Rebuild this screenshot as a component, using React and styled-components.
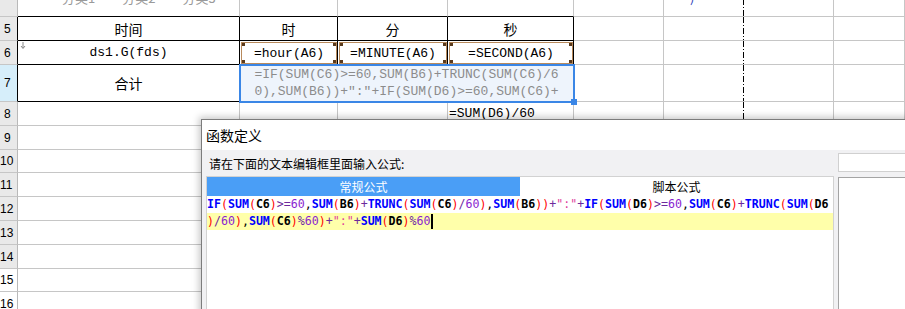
import styled, { createGlobalStyle } from "styled-components";

const GlobalStyle = createGlobalStyle`
  html, body { margin: 0; padding: 0; background: #fff; overflow: hidden; }
`;

const COLS = "18px 222px 98px 110px 126px 90px 80px 90px 1fr";
const GRID = "#c6c6c6";

const Page = styled.div`
  position: relative;
  width: 905px;
  height: 309px;
  overflow: hidden;
  font-family: "Liberation Mono", "Noto Sans CJK SC", monospace;
`;

const Sheet = styled.div`
  margin-top: -12px;
`;

const Row = styled.div`
  display: grid;
  grid-template-columns: ${COLS};
  height: ${(p) => p.$h}px;
`;

const RowHead = styled.div`
  box-sizing: border-box;
  background: ${(p) => (p.$sel ? "#d6eefa" : p.$plain ? "#fff" : "#e9e9e9")};
  border-right: 1px solid ${(p) => (p.$dark ? "#000" : "#b9b9b9")};
  border-bottom: 1px solid ${GRID};
  display: flex;
  align-items: center;
  padding-left: ${(p) => (p.$wide ? 0 : 4)}px;
  font: 12px "Liberation Sans", sans-serif;
  color: #000;
`;

const Cell = styled.div`
  position: relative;
  box-sizing: border-box;
  border-right: ${(p) => (p.$dash ? "none" : `1px solid ${p.$br ? "#000" : GRID}`)};
  border-bottom: 1px solid ${(p) => (p.$bb ? "#000" : GRID)};
  background-image: ${(p) =>
    p.$dash
      ? "repeating-linear-gradient(to bottom, #000 0 6px, transparent 6px 8px, #000 8px 9px, transparent 9px 11px)"
      : "none"};
  background-size: 1px 100%;
  background-position: right top;
  background-repeat: no-repeat;
  display: flex;
  align-items: ${(p) => (p.$top ? "flex-start" : "center")};
  justify-content: ${(p) => p.$justify || "center"};
  padding-left: ${(p) => p.$pl || 0}px;
  font-size: ${(p) => p.$fs || 13}px;
  color: ${(p) => p.$color || "#000"};
  white-space: nowrap;
`;

const CatText = styled.div`
  display: flex;
  gap: 27px;
  padding-top: 2px;
  font: 13px "Noto Sans CJK SC", sans-serif;
  line-height: 16px;
  color: #9a9a9a;
`;

const FormulaCell = styled(Cell)`
  padding: 1px 0 0 1px;
  align-items: stretch;
`;

const FormulaBox = styled.div`
  flex: 1;
  display: flex;
  align-items: center;
  justify-content: center;
  border: 1px solid #b88a5c;
  background:
    linear-gradient(#5a3a1c, #5a3a1c) left top / 3px 3px no-repeat,
    linear-gradient(#5a3a1c, #5a3a1c) right top / 3px 3px no-repeat,
    linear-gradient(#5a3a1c, #5a3a1c) left bottom / 3px 3px no-repeat,
    linear-gradient(#5a3a1c, #5a3a1c) right bottom / 3px 3px no-repeat;
`;

const Marker = styled.svg`
  position: absolute;
  left: 2px;
  top: 1px;
`;

const MergedCell = styled(Cell)`
  grid-column: span 3;
  background: #eef4fc;
  z-index: 1;
  &::after {
    content: "";
    position: absolute;
    top: -1px;
    left: -1px;
    right: -2px;
    bottom: -2px;
    border: 2px solid #3a86e6;
    pointer-events: none;
  }
`;

const Handle = styled.span`
  position: absolute;
  right: -4px;
  bottom: -4px;
  width: 6px;
  height: 6px;
  background: #3a86e6;
  z-index: 2;
`;

const WrapText = styled.div`
  width: 316px;
  white-space: normal;
  word-break: break-all;
  text-align: center;
  line-height: 17px;
  color: #8c8c8c;
`;

/* dialog */
const Dialog = styled.div`
  position: absolute;
  left: 201px;
  top: 119px;
  width: 740px;
  height: 220px;
  border-top: 1px solid #7c7c7c;
  border-left: 1px solid #7c7c7c;
  box-shadow: -2px -2px 7px rgba(0, 0, 0, 0.22);
  display: flex;
  flex-direction: column;
  font-family: "Noto Sans CJK SC", "Liberation Sans", sans-serif;
  z-index: 5;
`;

const Title = styled.div`
  height: 30px;
  background: #fff;
  display: flex;
  align-items: center;
  padding-left: 4px;
  font-size: 14px;
  color: #000;
`;

const Body = styled.div`
  flex: 1;
  background: #f1f1f3;
  display: grid;
  grid-template-columns: 636px 1fr;
`;

const LeftCol = styled.div`
  padding-left: 4px;
  display: flex;
  flex-direction: column;
`;

const Label = styled.div`
  height: 26px;
  display: flex;
  align-items: center;
  padding-left: 3px;
  font-size: 12px;
  color: #000;
`;

const Editor = styled.div`
  width: 628px;
  flex: 1;
  box-sizing: border-box;
  border: 1px solid #d2d2d2;
  background: #fff;
`;

const Tabs = styled.div`
  display: grid;
  grid-template-columns: 1fr 1fr;
  height: 19px;
`;

const Tab = styled.div`
  display: flex;
  align-items: center;
  justify-content: center;
  font-size: 12px;
  background: ${(p) => (p.$active ? "#4a9ef6" : "#fff")};
  color: ${(p) => (p.$active ? "#fff" : "#000")};
`;

const Code = styled.div`
  font: 11.6px "DejaVu Sans Mono", monospace;
  white-space: pre;
`;

const Line = styled.div`
  height: 17px;
  line-height: 17px;
  background: ${(p) => (p.$cur ? "#ffffaa" : "transparent")};
`;

const TOKEN_COLORS = {
  func: "#0000ff",
  ref: "#000",
  num: "#8a1fd0",
  str: "#e0409c",
  paren: "#ff0000",
  op: "#6c2a9c",
  plain: "#000",
};

const Token = styled.span`
  color: ${(p) => TOKEN_COLORS[p.$k]};
  font-weight: ${(p) => (p.$k === "func" || p.$k === "ref" ? 700 : 400)};
`;

const Caret = styled.span`
  display: inline-block;
  width: 2px;
  height: 15px;
  background: #000;
  vertical-align: middle;
`;

const RightCol = styled.div`
  padding-top: 3px;
  display: flex;
  flex-direction: column;
  gap: 5px;
`;

const InputBox = styled.div`
  height: 19px;
  box-sizing: border-box;
  border: 1px solid #d0d0d0;
  background: #fff;
`;

const ListBox = styled.div`
  flex: 1;
  border: 1px solid #a4a4a4;
  background: #fff;
`;

function tokenize(src) {
  const parts = src.match(/[A-Z]+(?=\()|[A-Z]+\d+|\d+|"[^"]*"|[()]|[+\-*/%<>=]+|./g) || [];
  return parts.map((t, i) => {
    let k = "plain";
    if (/^[A-Z]+$/.test(t)) k = "func";
    else if (/^[A-Z]+\d+$/.test(t)) k = "ref";
    else if (/^\d+$/.test(t)) k = "num";
    else if (t.startsWith('"')) k = "str";
    else if (t === "(" || t === ")") k = "paren";
    else if (/^[+\-*/%<>=]+$/.test(t)) k = "op";
    return (
      <Token key={i} $k={k}>
        {t}
      </Token>
    );
  });
}

function Blank({ from = 1 }) {
  const out = [];
  for (let i = from; i <= 8; i++) out.push(<Cell key={i} $dash={i === 6} />);
  return out;
}

const EMPTY_ROWS = [
  [9, 24],
  [10, 23],
  [11, 24],
  [12, 24],
  [13, 24],
  [14, 24],
  [15, 23],
  [16, 24],
];

const LINE1 = 'IF(SUM(C6)>=60,SUM(B6)+TRUNC(SUM(C6)/60),SUM(B6))+":"+IF(SUM(D6)>=60,SUM(C6)+TRUNC(SUM(D6';
const LINE2 = ')/60),SUM(C6)%60)+":"+SUM(D6)%60';

export default function App() {
  return (
    <Page>
      <GlobalStyle />
      <Sheet>
        <Row $h={29}>
          <RowHead />
          <Cell $bb $top $justify="flex-start" $pl={44}>
            <CatText>
              <span>分类1</span>
              <span>分类2</span>
              <span>分类3</span>
            </CatText>
          </Cell>
          <Cell $bb />
          <Cell $bb />
          <Cell $bb />
          <Cell />
          <Cell $top $justify="flex-start" $pl={26} $dash>
            <CatText style={{ color: "#2a3ab8" }}>)</CatText>
          </Cell>
          <Cell />
          <Cell />
        </Row>

        <Row $h={24}>
          <RowHead $dark>5</RowHead>
          <Cell $br $bb $fs={14}>时间</Cell>
          <Cell $br $bb $fs={14}>时</Cell>
          <Cell $br $bb $fs={14}>分</Cell>
          <Cell $br $bb $fs={14}>秒</Cell>
          <Blank from={5} />
        </Row>

        <Row $h={24}>
          <RowHead $dark>6</RowHead>
          <Cell $br $bb>
            <Marker width="6" height="7" viewBox="0 0 6 7">
              <path d="M3 0v6M1 4l2 2.5L5 4" stroke="#888" strokeWidth="1" fill="none" />
            </Marker>
            ds1.G(fds)
          </Cell>
          <FormulaCell $br $bb>
            <FormulaBox>=hour(A6)</FormulaBox>
          </FormulaCell>
          <FormulaCell $br $bb>
            <FormulaBox>=MINUTE(A6)</FormulaBox>
          </FormulaCell>
          <FormulaCell $br $bb>
            <FormulaBox>=SECOND(A6)</FormulaBox>
          </FormulaCell>
          <Blank from={5} />
        </Row>

        <Row $h={37}>
          <RowHead $dark $sel>7</RowHead>
          <Cell $br $bb $fs={14}>合计</Cell>
          <MergedCell $br $bb>
            <WrapText>=IF(SUM(C6)&gt;=60,SUM(B6)+TRUNC(SUM(C6)/60),SUM(B6))+":"+IF(SUM(D6)&gt;=60,SUM(C6)+</WrapText>
            <Handle />
          </MergedCell>
          <Blank from={5} />
        </Row>

        <Row $h={24}>
          <RowHead>8</RowHead>
          <Cell />
          <Cell />
          <Cell />
          <Cell $justify="flex-start" $pl={1}>=SUM(D6)/60</Cell>
          <Blank from={5} />
        </Row>

        {EMPTY_ROWS.map(([n, h]) => (
          <Row key={n} $h={h}>
            <RowHead $plain={n >= 15} $wide={n >= 10}>{n}</RowHead>
            <Blank />
          </Row>
        ))}
      </Sheet>

      <Dialog>
        <Title>函数定义</Title>
        <Body>
          <LeftCol>
            <Label>请在下面的文本编辑框里面输入公式:</Label>
            <Editor>
              <Tabs>
                <Tab $active>常规公式</Tab>
                <Tab>脚本公式</Tab>
              </Tabs>
              <Code>
                <Line>{tokenize(LINE1)}</Line>
                <Line $cur>
                  {tokenize(LINE2)}
                  <Caret />
                </Line>
              </Code>
            </Editor>
          </LeftCol>
          <RightCol>
            <InputBox />
            <ListBox />
          </RightCol>
        </Body>
      </Dialog>
    </Page>
  );
}
